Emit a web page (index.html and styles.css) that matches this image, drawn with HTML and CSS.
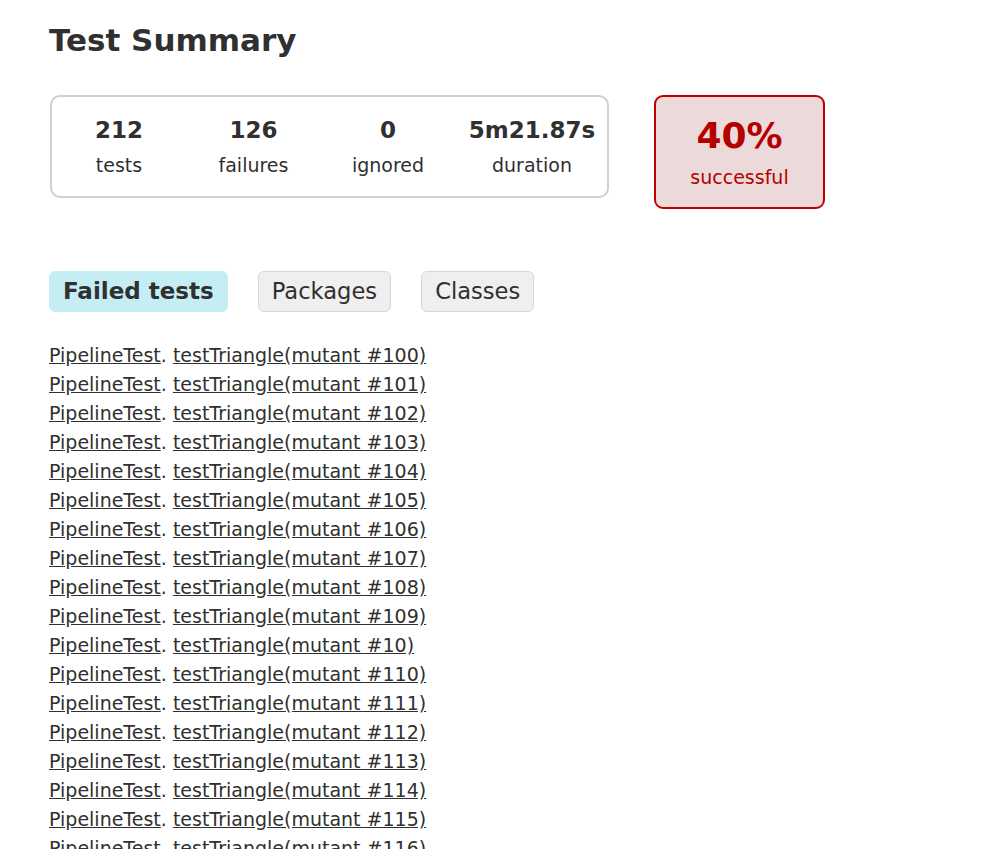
FILE: index.html
```html
<!DOCTYPE html>
<html>
<head>
<meta charset="utf-8">
<title>Test Summary</title>
<link rel="stylesheet" href="styles.css">
</head>
<body>
<div class="content">
  <h1 class="title">Test Summary</h1>
  <div class="summary">
    <div class="counters">
      <div class="info-box"><div class="counter">212</div><div class="label">tests</div></div>
      <div class="info-box"><div class="counter">126</div><div class="label">failures</div></div>
      <div class="info-box"><div class="counter">0</div><div class="label">ignored</div></div>
      <div class="info-box"><div class="counter">5m21.87s</div><div class="label">duration</div></div>
    </div>
    <div class="success-box">
      <div class="percent">40%</div>
      <div class="label">successful</div>
    </div>
  </div>
  <ul class="tabs">
    <li class="tab tab-active">Failed tests</li>
    <li class="tab tab-plain">Packages</li>
    <li class="tab tab-plain">Classes</li>
  </ul>
  <ul class="test-list">
    <li><a href="#">PipelineTest</a>. <a href="#">testTriangle(mutant #100)</a></li>
    <li><a href="#">PipelineTest</a>. <a href="#">testTriangle(mutant #101)</a></li>
    <li><a href="#">PipelineTest</a>. <a href="#">testTriangle(mutant #102)</a></li>
    <li><a href="#">PipelineTest</a>. <a href="#">testTriangle(mutant #103)</a></li>
    <li><a href="#">PipelineTest</a>. <a href="#">testTriangle(mutant #104)</a></li>
    <li><a href="#">PipelineTest</a>. <a href="#">testTriangle(mutant #105)</a></li>
    <li><a href="#">PipelineTest</a>. <a href="#">testTriangle(mutant #106)</a></li>
    <li><a href="#">PipelineTest</a>. <a href="#">testTriangle(mutant #107)</a></li>
    <li><a href="#">PipelineTest</a>. <a href="#">testTriangle(mutant #108)</a></li>
    <li><a href="#">PipelineTest</a>. <a href="#">testTriangle(mutant #109)</a></li>
    <li><a href="#">PipelineTest</a>. <a href="#">testTriangle(mutant #10)</a></li>
    <li><a href="#">PipelineTest</a>. <a href="#">testTriangle(mutant #110)</a></li>
    <li><a href="#">PipelineTest</a>. <a href="#">testTriangle(mutant #111)</a></li>
    <li><a href="#">PipelineTest</a>. <a href="#">testTriangle(mutant #112)</a></li>
    <li><a href="#">PipelineTest</a>. <a href="#">testTriangle(mutant #113)</a></li>
    <li><a href="#">PipelineTest</a>. <a href="#">testTriangle(mutant #114)</a></li>
    <li><a href="#">PipelineTest</a>. <a href="#">testTriangle(mutant #115)</a></li>
    <li><a href="#">PipelineTest</a>. <a href="#">testTriangle(mutant #116)</a></li>
  </ul>
</div>
</body>
</html>
```

FILE: styles.css
```css
html, body {
  margin: 0;
  padding: 0;
  background: #ffffff;
}
body {
  font-family: "DejaVu Sans", sans-serif;
  font-size: 19px;
  color: #303030;
}
.content {
  padding: 20px 49px 0 49px;
}
.title {
  font-size: 31px;
  font-weight: bold;
  margin: 0;
  line-height: 40px;
}
.summary {
  display: flex;
  align-items: flex-start;
  gap: 45px;
  margin-top: 35px;
  margin-left: 1px;
}
.counters {
  display: grid;
  grid-template-columns: 110px 111px 110px 130px;
  column-gap: 24px;
  border: 2px solid #d0d0d0;
  border-radius: 10px;
  padding: 17px 10px 18px 12px;
}
.info-box {
  text-align: center;
}
.counter {
  font-size: 23px;
  font-weight: bold;
  line-height: 32px;
}
.label {
  font-size: 19px;
  line-height: 26px;
  margin-top: 6px;
}
.success-box {
  width: 171px;
  box-sizing: border-box;
  height: 114px;
  border: 2px solid #c00000;
  border-radius: 9px;
  background: #ecdadb;
  color: #b40000;
  text-align: center;
  padding-top: 16px;
}
.percent {
  font-size: 36px;
  font-weight: bold;
  line-height: 46px;
}
.success-box .label {
  margin-top: 5px;
}
.tabs {
  list-style: none;
  margin: 62px 0 0 0;
  padding: 0;
  display: flex;
  gap: 30px;
}
.tab {
  font-size: 23px;
  line-height: 39px;
  padding: 0 13px;
  border: 1px solid #d6d6d6;
  border-radius: 6px;
  background: #efefef;
}
.tab-active {
  font-weight: bold;
  background: #c4eef4;
  border-color: #c4eef4;
}
.tab-plain {
  font-size: 22.6px;
}
.test-list {
  list-style: none;
  margin: 29px 0 0 0;
  padding: 0;
}
.test-list li {
  line-height: 29px;
  white-space: nowrap;
}
.test-list a {
  color: #303030;
  text-decoration: underline;
}
```
